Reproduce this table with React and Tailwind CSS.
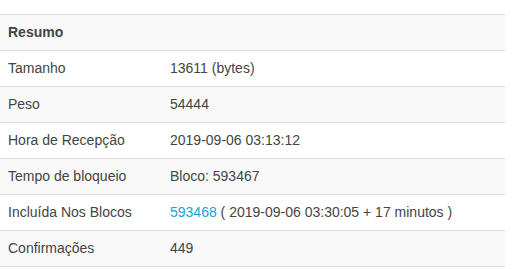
import React from 'react';

const rows = [
  { label: 'Tamanho', value: '13611 (bytes)' },
  { label: 'Peso', value: '54444' },
  { label: 'Hora de Recepção', value: '2019-09-06 03:13:12' },
  { label: 'Tempo de bloqueio', value: 'Bloco: 593467' },
  {
    label: 'Incluída Nos Blocos',
    value: (
      <>
        <a href="#" className="text-[#1ba1e2]">593468</a> ( 2019-09-06 03:30:05 + 17 minutos )
      </>
    ),
  },
  { label: 'Confirmações', value: '449' },
];

const App = () => (
  <div className="min-h-screen bg-white pt-[14px] font-['Liberation_Sans',Arial,sans-serif] text-[14px] text-[#444]">
    <div className="w-[505px] border-b border-[#ddd]">
      {/* Header */}
      <div className="h-[36px] flex items-center border-t border-[#ddd] bg-[#f9f9f9] px-2 font-bold">
        Resumo
      </div>

      {/* Rows */}
      {rows.map((row, i) => (
        <div
          key={row.label}
          className={`h-[36px] flex items-center border-t border-[#ddd] ${i % 2 === 1 ? 'bg-[#f9f9f9]' : 'bg-white'}`}
        >
          <div className="w-[170px] shrink-0 pl-2">{row.label}</div>
          <div className="flex-1">{row.value}</div>
        </div>
      ))}
    </div>
  </div>
);

export default App;
